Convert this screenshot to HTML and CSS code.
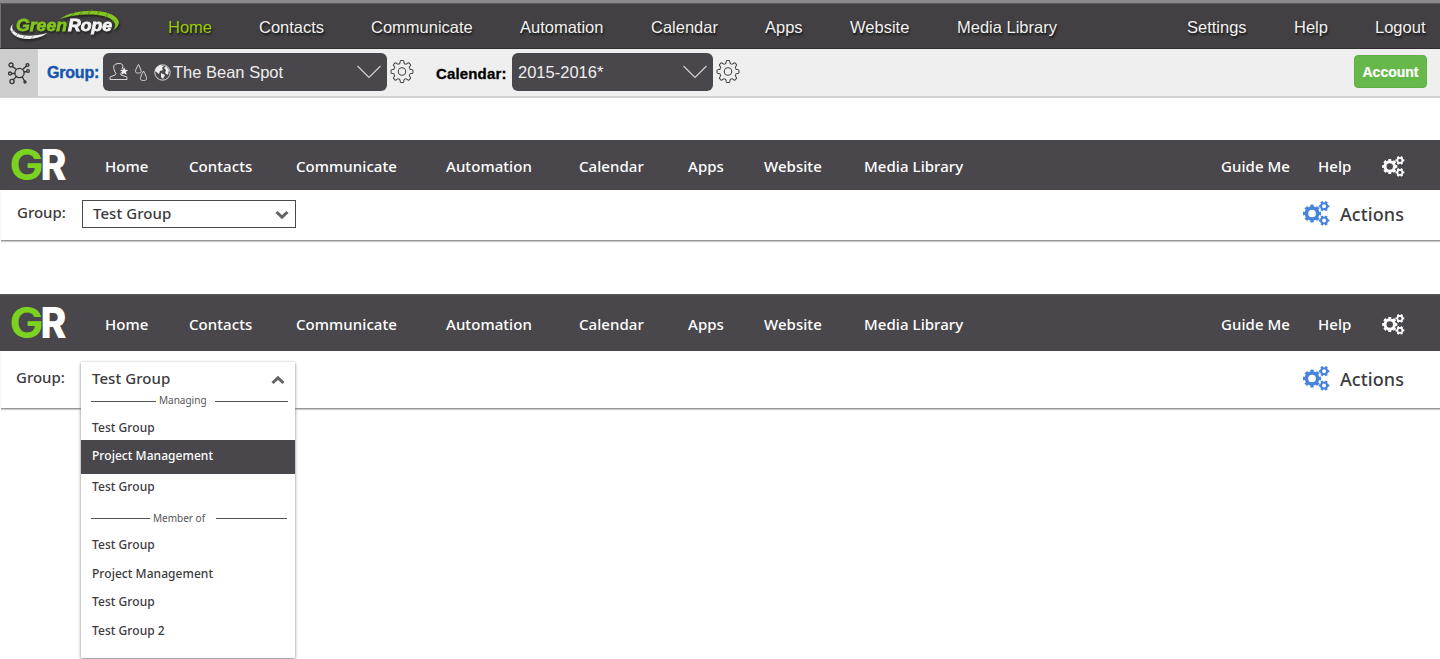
FILE: index.html
```
<!DOCTYPE html>
<html lang="en">
<head>
<meta charset="utf-8">
<title>GreenRope navigation</title>
<link rel="stylesheet" href="styles.css">
</head>
<body>
<svg width="0" height="0" class="defs" aria-hidden="true">
  <defs>
    <path id="tooth" d="M-3.3-7.9Q-2.1-8-2-9.5Q-1.9-11.4-1.2-11.4H1.2Q1.9-11.4 2-9.5Q2.1-8 3.3-7.9"/>
    <symbol id="cog" viewBox="-12.5 -12.5 25 25">
      <g fill="none" stroke="currentColor" stroke-width="1.1">
        <use href="#tooth"/><use href="#tooth" transform="rotate(45)"/><use href="#tooth" transform="rotate(90)"/><use href="#tooth" transform="rotate(135)"/><use href="#tooth" transform="rotate(180)"/><use href="#tooth" transform="rotate(225)"/><use href="#tooth" transform="rotate(270)"/><use href="#tooth" transform="rotate(315)"/>
        <circle r="3.9"/>
      </g>
    </symbol>
    <symbol id="gears" viewBox="0 0 26 24">
      <g fill="none" stroke="currentColor">
        <circle cx="8.700" cy="12" r="5.400" stroke-width="3.400"/>
        <circle cx="8.700" cy="12" r="7.500" stroke-width="2.400" pathLength="16" stroke-dasharray="1.100 .9" stroke-dashoffset=".55"/>
        <circle cx="20.300" cy="5" r="2.900" stroke-width="2"/>
        <circle cx="20.300" cy="5" r="4.100" stroke-width="2" pathLength="12" stroke-dasharray="1 1" stroke-dashoffset=".5"/>
        <circle cx="20.300" cy="18.800" r="2.900" stroke-width="2"/>
        <circle cx="20.300" cy="18.800" r="4.100" stroke-width="2" pathLength="12" stroke-dasharray="1 1" stroke-dashoffset=".5"/>
      </g>
    </symbol>
    <symbol id="wide-chevron" viewBox="0 0 24 14"><path d="M.5 1 12 12.500 23.500 1" fill="none" stroke="currentColor" stroke-width="1.1"/></symbol>
    <symbol id="chevron" viewBox="0 0 14 10"><path d="m1.500 2 5.500 5.200L12.500 2" fill="none" stroke="currentColor" stroke-width="3"/></symbol>
  </defs>
</svg>

<header class="classic">
  <nav class="classic-nav">
    <svg class="rope-logo" width="114" height="34" viewBox="0 0 114 34">
      <path d="M51 11C64 0 106-1 110 14Q110 19 104 22Q108 18 105 14C98 4 68 5 51 11Z" fill="#82c321"/>
      <path d="m62 8 5-5m3 4 5-5m4 4 4-5m5 6 3-5m5 8 3-5m2 11 4-4" stroke="#4f7425" stroke-width=".8"/>
      <path d="M4 16Q-2 21 5 27C13 34 32 31 38 25Q20 30 9 26Q1 22 4 16Z" fill="#eee"/>
      <path d="m2 24 4-2m1 6 3-3m4 5 3-3m5 4 2-3" stroke="#888" stroke-width=".7"/>
      <text x="7" y="23" textLength="51" lengthAdjust="spacingAndGlyphs" class="rope-green">Green</text>
      <text x="59" y="23" textLength="44" lengthAdjust="spacingAndGlyphs" class="rope-white">Rope</text>
    </svg>
    <a class="on">Home</a><a>Contacts</a><a>Communicate</a><a>Automation</a><a>Calendar</a><a>Apps</a><a>Website</a><a>Media Library</a><a>Settings</a><a>Help</a><a>Logout</a>
  </nav>
  <div class="classic-tools">
    <span class="network"><svg width="24" height="24" viewBox="0 0 24 24" fill="none" stroke="#333" stroke-width="1.3">
      <circle cx="12.500" cy="12" r="4.600"/><circle cx="4" cy="4" r="2"/><circle cx="3" cy="12.500" r="1.500"/><circle cx="5" cy="20.500" r="2.100"/><circle cx="20.500" cy="4" r="1.400"/><circle cx="21" cy="10" r="1.300"/><circle cx="18" cy="21" r="1"/>
      <path d="m5.500 5.500 4 3M4.500 12.500H8m-2 6.500 4-4m5.500-6.500 4-3.500m-2.500 6 3-.5m-5 5 2.500 4.500"/></svg></span>
    <b class="group-label">Group:</b>
    <div class="dark-select bean">
      <svg width="62" height="22" viewBox="0 0 62 22" fill="none" stroke="#d8d8d8" stroke-width="1">
        <path d="M6 11Q2 3 9 2.500T13 8M6 11Q8 13 6 14L1 16V18.500H18V16L12 14Q11 13 13 11"/>
        <path d="m15 6 1.200 2.700 3 .2-2.300 1.900.8 3-2.700-1.600-2.500 1.600.7-3L11 8.900l3-.2Z" fill="#eee" stroke="none"/>
        <path d="M29.500 3.500C25 11 26 12 29.500 12S33 11 29.500 3.500ZM34.500 10C30 18 31 19.500 34.500 19.500S39 18 34.500 10Z"/>
        <circle cx="53.500" cy="11.500" r="7.700"/>
        <path d="m47 7 4-3 4 1-2 2 1 2-3 1-1 3-4-3Zm10-2 3 4-1 5-3-2 1-3-2-2ZM52 12l4 2-2 4-2-2Z" fill="#eee" stroke="none"/>
      </svg><span>The Bean Spot</span><svg class="wide" width="24" height="14"><use href="#wide-chevron"/></svg>
    </div>
    <svg class="cog" width="24" height="25"><use href="#cog"/></svg>
    <b class="calendar-label">Calendar:</b>
    <div class="dark-select year"><span>2015-2016*</span><svg class="wide" width="24" height="14"><use href="#wide-chevron"/></svg></div>
    <svg class="cog" width="24" height="25"><use href="#cog"/></svg>
    <button class="account">Account</button>
  </div>
</header>

<header class="modern first">
  <nav class="modern-nav">
    <svg class="gr" width="58" height="38" viewBox="0 0 58 38"><text x="-1.500" y="34" textLength="34" lengthAdjust="spacingAndGlyphs" fill="#7bd320">G</text><text x="29.500" y="34" textLength="26" lengthAdjust="spacingAndGlyphs" fill="#fff" class="r">R</text></svg>
    <a>Home</a><a>Contacts</a><a>Communicate</a><a>Automation</a><a>Calendar</a><a>Apps</a><a>Website</a><a>Media Library</a><a>Guide Me</a><a>Help</a>
    <svg class="nav-gears" width="23" height="21"><use href="#gears"/></svg>
  </nav>
  <div class="modern-tools">
    <span class="label">Group:</span>
    <div class="select"><span>Test Group</span><svg width="14" height="10"><use href="#chevron"/></svg></div>
    <div class="actions"><svg width="27" height="25"><use href="#gears"/></svg><span>Actions</span></div>
  </div>
</header>

<header class="modern second">
  <nav class="modern-nav">
    <svg class="gr" width="58" height="38" viewBox="0 0 58 38"><text x="-1.500" y="34" textLength="34" lengthAdjust="spacingAndGlyphs" fill="#7bd320">G</text><text x="29.500" y="34" textLength="26" lengthAdjust="spacingAndGlyphs" fill="#fff" class="r">R</text></svg>
    <a>Home</a><a>Contacts</a><a>Communicate</a><a>Automation</a><a>Calendar</a><a>Apps</a><a>Website</a><a>Media Library</a><a>Guide Me</a><a>Help</a>
    <svg class="nav-gears" width="23" height="21"><use href="#gears"/></svg>
  </nav>
  <div class="modern-tools">
    <span class="label">Group:</span>
    <div class="menu">
      <div class="menu-head"><span>Test Group</span><svg width="14" height="10"><use href="#chevron"/></svg></div>
      <div class="divider managing"><i></i><span>Managing</span><i></i></div>
      <div class="item i1">Test Group</div>
      <div class="item chosen">Project Management</div>
      <div class="item i3">Test Group</div>
      <div class="divider member"><i></i><span>Member of</span><i></i></div>
      <div class="item i4">Test Group</div>
      <div class="item i5">Project Management</div>
      <div class="item i6">Test Group</div>
      <div class="item i7">Test Group 2</div>
    </div>
    <div class="actions"><svg width="27" height="25"><use href="#gears"/></svg><span>Actions</span></div>
  </div>
</header>
</body>
</html>
```
FILE: styles.css
```
* { box-sizing: border-box; }
body { margin: 0; background: #fff; height: 659px; overflow: hidden; font-family: "Noto Sans", sans-serif; color: #3c3a3d; }
svg { display: block; flex: none; overflow: visible; }
.defs { position: absolute; }

.classic { height: 98px; font-family: "Liberation Sans", Arial, sans-serif; }
.classic-nav {
  display: grid; height: 49px; padding-left: 9px; align-items: center;
  grid-template-columns: 159px 91px 112px 149px 131px 114px 85px 107px 230px 107px 81px 65px;
  background: #424043; border-top: 3px solid #8c8a8e; border-bottom: 1px solid #2f2d30;
  box-shadow: inset 0 1px #5b595c, inset 1px 0 #737175;
}
.classic-nav a { font-size: 16.5px; line-height: 20px; padding-top: 2px; color: #f1f1f1; white-space: nowrap; text-shadow: 1px 2px 2px #151515; }
.classic-nav .on { color: #99cc00; }
.rope-logo { margin-top: -1px; filter: drop-shadow(1px 2px 1px #222); }
.rope-logo text { font: italic bold 17px "Liberation Sans", Arial, sans-serif; }
.rope-green { fill: #82c321; stroke: #82c321; stroke-width: .8; }
.rope-white { fill: #f4f4f4; stroke: #f4f4f4; stroke-width: .8; }
.classic-tools { display: flex; height: 49px; background: #efefef; border-bottom: 2px solid #d3d3d3; }
.network { width: 38px; height: 48px; padding: 12px 0 0 7px; background: #cdcdcd; }
.group-label { width: 65px; padding: 14px 0 0 9px; color: #1355b0; font-size: 16px; line-height: 20px; letter-spacing: -.2px; -webkit-text-stroke: .4px; }
.dark-select { display: flex; align-items: center; height: 38px; margin-top: 4px; padding: 0 4px 0 6px; border-radius: 6px; background: #49474b; color: #eee; font-size: 16.5px; }
.dark-select span { padding-top: 1px; }
.bean { width: 284px; }
.bean span { margin-left: 2px; }
.year { width: 201px; }
.wide { margin-left: auto; margin-right: 2px; color: #d5d5d5; }
.cog { margin: 10px 0 0 3px; color: #444; }
.calendar-label { width: 98px; padding: 15px 0 0 22px; font-size: 15px; line-height: 20px; letter-spacing: .15px; color: #000; -webkit-text-stroke: .3px; }
.account { width: 73px; height: 33px; margin: 6px 13px 0 auto; padding: 0; border: 1px solid #5eb045; border-radius: 4px; background: #67b84b; color: #fff; font: bold 14px "Liberation Sans", Arial, sans-serif; -webkit-text-stroke: .2px; }

.modern-nav {
  display: grid; align-items: center; padding-left: 11px; background: #49474b;
  grid-template-columns: 94px 84px 107px 150px 133px 109px 76px 100px 357px 97px 65px 50px;
}
.modern-nav a { color: #fff; font-size: 15px; font-weight: 500; line-height: 20px; letter-spacing: .06px; white-space: nowrap; }
.gr text { font: 700 42px Inter, sans-serif; }
.gr .r { font-weight: 800; }
.nav-gears { color: #fff; margin-top: 3px; margin-left: -1px; }
.first { margin-top: 42px; }
.first .modern-nav { height: 50px; padding-bottom: 0; }
.first .modern-nav a { padding-top: 1px; }
.modern-tools { display: flex; margin-left: 1px; border-bottom: 1px solid #969696; box-shadow: 0 1px 1px #ccc; }
.first .modern-tools { height: 51px; }
.label { width: 81px; padding: 12px 0 0 16px; font-size: 15px; font-weight: 500; line-height: 20px; }
.select { display: flex; align-items: center; justify-content: space-between; width: 214px; height: 28px; margin-top: 10px; padding: 0 6px 0 10px; border: 1px solid #49474b; font-size: 15px; font-weight: 500; }
.select span, .menu-head span { margin-top: -2px; letter-spacing: .06px; }
.select svg, .menu-head svg { color: #656366; margin-top: 2px; }
.actions { display: flex; align-items: center; gap: 10px; height: 30px; margin: 9px 36px 0 auto; font-size: 18px; font-weight: 500; letter-spacing: .1px; }
.actions svg { color: #4783dc; margin-top: -1px; }
.second { margin-top: 53px; }
.second .modern-nav { height: 57px; border-top: 1px solid #5d5b5e; }
.second .modern-nav a { padding-top: 2px; }
.second .modern-tools { height: 58px; margin-left: 1px; }
.second .label { width: 80px; padding: 16px 0 0 15px; }
.second .actions { margin-top: 13px; }

.menu { position: relative; width: 214px; height: 296px; margin-top: 11px; background: #fff; box-shadow: 0 1px 3px #777; }
.menu-head { display: flex; justify-content: space-between; align-items: center; height: 33px; padding: 0 10px 0 11px; font-size: 15px; font-weight: 500; }
.menu-head svg { transform: rotate(180deg); }
.divider { display: flex; align-items: center; height: 14px; margin-left: 10px; font-size: 10px; line-height: 14px; color: #555; }
.divider i { height: 1px; background: #555; }
.divider span { white-space: nowrap; margin-top: -2px; }
.managing { margin-top: -1px; }
.managing i:first-child { width: 65px; }
.managing span { width: 59px; padding-left: 3px; }
.managing i:last-child { width: 73px; }
.member { margin-top: 6px; }
.member i:first-child { width: 59px; }
.member span { width: 66px; margin-top: 0; padding-left: 3px; }
.member i:last-child { width: 71px; }
.item { padding-left: 11px; height: 28px; font-size: 12px; font-weight: 500; letter-spacing: .05px; line-height: 28px; }
.i1 { height: 32px; padding-top: 6px; }
.chosen { height: 34px; line-height: 31px; background: #49474b; color: #fff; }
.i3 { height: 31px; line-height: 26px; }
.i4 { height: 33px; line-height: 39px; }
.i5 { height: 29px; line-height: 31px; }
.i6 { height: 28px; line-height: 29px; }
.i7 { line-height: 31px; }
```
